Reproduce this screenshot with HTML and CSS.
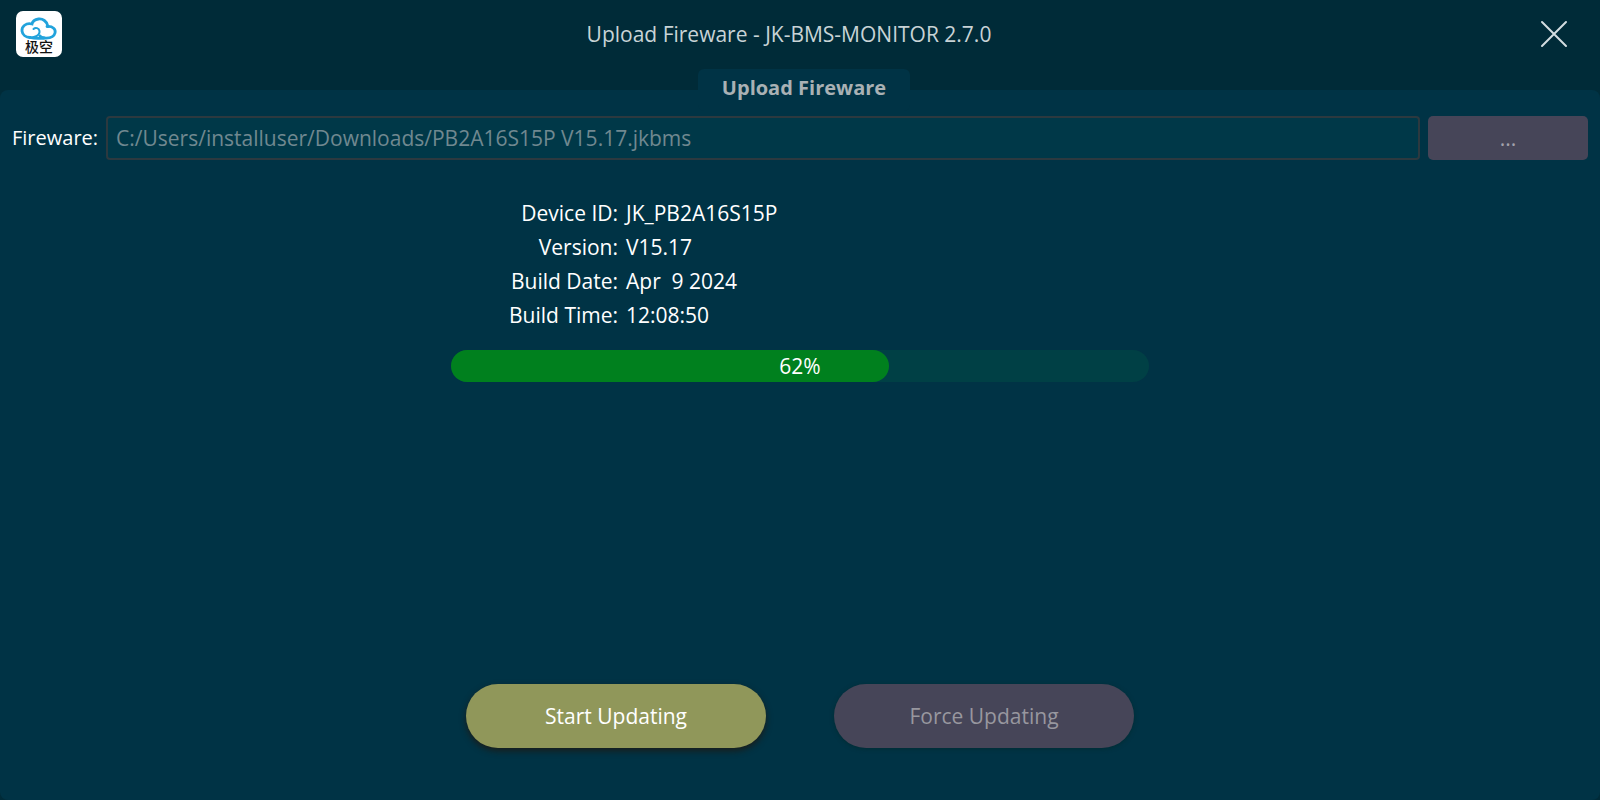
FILE: index.html
```html
<!DOCTYPE html>
<html lang="en">
<head>
    <meta charset="UTF-8">
    <meta name="viewport" content="width=device-width, initial-scale=1.0">
    <title>Upload Fireware - JK-BMS-MONITOR 2.7.0</title>
    <link rel="stylesheet" href="styles.css">
</head>
<body>
    <header class="title-bar">
        <svg class="logo" viewBox="0 0 46 46" role="img" aria-label="极空">
            <rect width="46" height="46" rx="7" fill="#fff"/>
            <g fill="none" stroke="#22a3dc" stroke-width="2.8" stroke-linecap="round">
                <path d="M31 15.5 C37 15 40 18.500 39 22 C38 26 34 27.500 28 27 C25.500 26.800 24.500 26 24 25"/>
                <path d="M32 15.5 C31 10 26.500 7.500 22.500 8 C18.500 8.500 16.500 10.500 16 13 C10 11.500 5.500 15.500 6 20 C6.500 24 10 26.500 14 26.500"/>
                <path d="M12 26 C18 27.500 24 24.500 23.500 20 C23 17 19.500 16 17.500 18" stroke-width="2"/>
                <path d="M14 26.500 C18 27.500 24 27.500 28 27"/>
            </g>
            <text class="logo-text" x="23" y="41" text-anchor="middle">极空</text>
        </svg>
        <h1 class="window-title">Upload Fireware - JK-BMS-MONITOR 2.7.0</h1>
        <button class="close-btn" type="button" aria-label="Close">
            <svg viewBox="0 0 28 28" width="28" height="28">
                <path d="M2 2 L26 26 M26 2 L2 26" stroke="#d3dde0" stroke-width="2" stroke-linecap="round"/>
            </svg>
        </button>
    </header>

    <form class="upload-form">
        <fieldset class="panel">
            <legend class="panel-title">Upload Fireware</legend>

            <div class="file-row">
                <label class="file-label" for="fireware">Fireware:</label>
                <input class="file-path" id="fireware" type="text" value="C:/Users/installuser/Downloads/PB2A16S15P V15.17.jkbms" disabled>
                <button class="browse-btn" type="button" disabled>...</button>
            </div>

            <div class="status">
                <dl class="info">
                    <dt>Device ID:</dt>
                    <dd>JK_PB2A16S15P</dd>
                    <dt>Version:</dt>
                    <dd>V15.17</dd>
                    <dt>Build Date:</dt>
                    <dd>Apr  9 2024</dd>
                    <dt>Build Time:</dt>
                    <dd>12:08:50</dd>
                </dl>
                <div class="progress" role="progressbar" aria-label="Update progress" aria-valuemin="0" aria-valuemax="100" aria-valuenow="62">
                    <div class="progress-fill" style="width: 62.8%"></div>
                    <span class="progress-text">62%</span>
                </div>
            </div>

            <div class="actions">
                <button class="action-btn start" type="button">Start Updating</button>
                <button class="action-btn force" type="button" disabled>Force Updating</button>
            </div>
        </fieldset>
    </form>
</body>
</html>
```
FILE: styles.css
```css
* {
    box-sizing: border-box;
}

body {
    margin: 0;
    min-height: 100vh;
    display: flex;
    flex-direction: column;
    background-color: #002b38;
    color: #fff;
    font-family: "Open Sans", "Noto Sans", sans-serif;
    font-size: 21px;
    line-height: 34px;
}

input,
button {
    font: inherit;
}

/* Title bar */
.title-bar {
    display: flex;
    align-items: center;
    justify-content: space-between;
    height: 68px;
    margin-bottom: 1px;
    padding: 0 20px 0 16px;
}

.logo {
    width: 46px;
    height: 46px;
}

.logo-text {
    font-family: "Noto Sans CJK SC", sans-serif;
    font-size: 14px;
    font-weight: 500;
    fill: #111;
}

.window-title {
    margin: 0;
    font-size: 21px;
    font-weight: 400;
    color: #c8d3d6;
}

.close-btn {
    display: flex;
    padding: 12px 12px 12px 24px;
    border: none;
    background: none;
    cursor: pointer;
}

/* Main panel */
.upload-form {
    flex: 1;
    display: flex;
}

.panel {
    flex: 1;
    min-width: 0;
    display: flex;
    flex-direction: column;
    margin: 0;
    padding: 5px 4px 52px 12px;
    border: none;
    border-radius: 8px;
    background-color: #003345;
}

.panel-title {
    margin: 0 auto;
    padding: 0 24px 4px;
    border-radius: 6px;
    background-color: #003345;
    color: #a9b1b4;
    font-size: 20px;
    font-weight: 700;
    line-height: 38px;
}

.file-row {
    display: flex;
    align-items: center;
    gap: 8px;
    padding-right: 8px;
}

.file-label {
    font-size: 20px;
}

.file-path {
    flex: 1;
    min-width: 0;
    height: 44px;
    padding: 0 8px;
    border: 2px solid #2c393f;
    border-radius: 4px;
    background-color: #003848;
    color: #708890;
}

.browse-btn {
    width: 160px;
    height: 44px;
    border: none;
    border-radius: 5px;
    background-color: #464558;
    color: #a3a2ac;
}

/* Device info and progress */
.status {
    flex: 1;
    width: 100%;
    max-width: 706px;
    margin: 0 auto;
    padding: 36px 8px 0 0;
}

.info {
    display: grid;
    grid-template-columns: 167px 1fr;
    column-gap: 8px;
    margin: 0 0 18px;
}

.info dt {
    text-align: right;
}

.info dd {
    margin: 0;
    white-space: pre;
}

.progress {
    display: grid;
    height: 32px;
    border-radius: 16px;
    background-color: #004045;
}

.progress-fill,
.progress-text {
    grid-area: 1 / 1;
}

.progress-fill {
    border-radius: 16px;
    background-color: #00801e;
}

.progress-text {
    text-align: center;
    line-height: 32px;
}

/* Buttons */
.actions {
    display: flex;
    justify-content: center;
    gap: 68px;
    padding-right: 8px;
}

.action-btn {
    width: 300px;
    height: 64px;
    border: none;
    border-radius: 32px;
}

.start {
    background-color: #90975a;
    color: #fff;
    box-shadow: 0 3px 6px rgba(32, 24, 16, 0.8);
    cursor: pointer;
}

.force {
    background-color: #464558;
    color: #98979f;
    box-shadow: 0 1px 4px rgba(0, 40, 40, 0.6);
}
```
